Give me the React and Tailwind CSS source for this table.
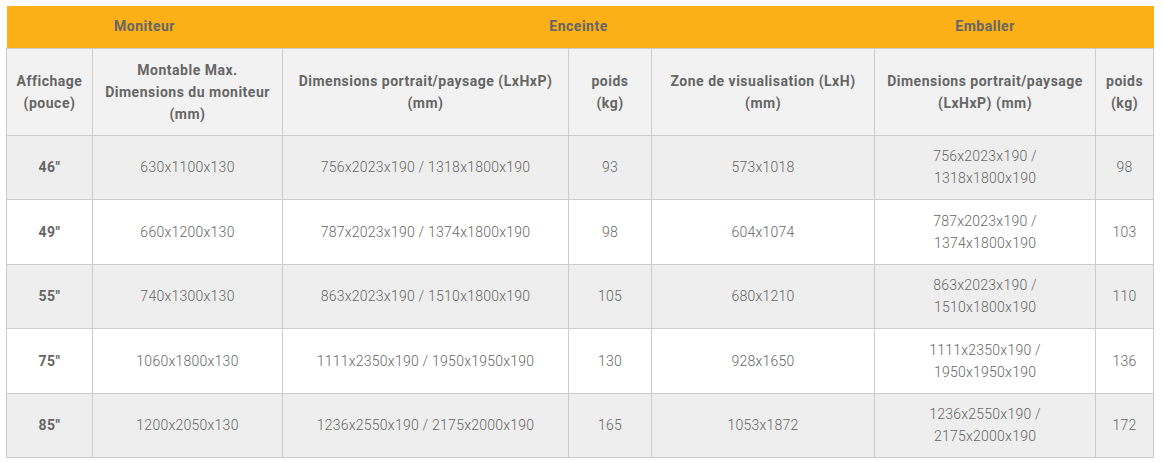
import React from 'react';

const rows = [
    { size: '46"', mount: '630x1100x130', dims: '756x2023x190 / 1318x1800x190', kg: '93', view: '573x1018', pack: ['756x2023x190 /', '1318x1800x190'], packKg: '98' },
    { size: '49"', mount: '660x1200x130', dims: '787x2023x190 / 1374x1800x190', kg: '98', view: '604x1074', pack: ['787x2023x190 /', '1374x1800x190'], packKg: '103' },
    { size: '55"', mount: '740x1300x130', dims: '863x2023x190 / 1510x1800x190', kg: '105', view: '680x1210', pack: ['863x2023x190 /', '1510x1800x190'], packKg: '110' },
    { size: '75"', mount: '1060x1800x130', dims: '1111x2350x190 / 1950x1950x190', kg: '130', view: '928x1650', pack: ['1111x2350x190 /', '1950x1950x190'], packKg: '136' },
    { size: '85"', mount: '1200x2050x130', dims: '1236x2550x190 / 2175x2000x190', kg: '165', view: '1053x1872', pack: ['1236x2550x190 /', '2175x2000x190'], packKg: '172' },
];

const th = 'border border-[#cccccc] px-2 text-center align-middle font-bold text-[14px] leading-[22px] tracking-[0.5px] text-[#666666]';
const td = 'border border-[#cccccc] px-2 text-center align-middle text-[14px] leading-[22px] tracking-[0.25px] text-[#666666] font-light';
const top = 'text-center align-middle font-bold text-[14px] tracking-[0.5px] text-[#666666]';

const App = () => {
    return (
        <div className="bg-white w-[1163px] h-[463px] p-[6px]" style={{ fontFamily: 'Roboto, "Liberation Sans", sans-serif' }}>
            <table className="table-fixed border-collapse w-[1147px]">
                <colgroup>
                    <col className="w-[86px]" />
                    <col className="w-[190px]" />
                    <col className="w-[286px]" />
                    <col className="w-[83px]" />
                    <col className="w-[223px]" />
                    <col className="w-[221px]" />
                    <col className="w-[58px]" />
                </colgroup>
                <thead>
                    <tr className="bg-[#fcaf17] h-[42px]">
                        <th colSpan={2} className={top}>Moniteur</th>
                        <th colSpan={3} className={top}>Enceinte</th>
                        <th className={top}>Emballer</th>
                        <th></th>
                    </tr>
                    <tr className="bg-[#f2f2f2] h-[87px]">
                        <th className={th}>Affichage<br />(pouce)</th>
                        <th className={th}>Montable Max.<br />Dimensions du moniteur<br />(mm)</th>
                        <th className={th}>Dimensions portrait/paysage (LxHxP)<br />(mm)</th>
                        <th className={th}>poids<br />(kg)</th>
                        <th className={th}>Zone de visualisation (LxH)<br />(mm)</th>
                        <th className={th}>Dimensions portrait/paysage<br />(LxHxP) (mm)</th>
                        <th className={th}>poids<br />(kg)</th>
                    </tr>
                </thead>
                <tbody>
                    {rows.map((r, i) => (
                        <tr key={r.size} className={(i % 2 === 0 ? 'bg-[#eeeeee]' : 'bg-white') + ' h-[64.5px]'}>
                            <td className={th}>{r.size}</td>
                            <td className={td}>{r.mount}</td>
                            <td className={td}>{r.dims}</td>
                            <td className={td}>{r.kg}</td>
                            <td className={td}>{r.view}</td>
                            <td className={td}>{r.pack[0]}<br />{r.pack[1]}</td>
                            <td className={td}>{r.packKg}</td>
                        </tr>
                    ))}
                </tbody>
            </table>
        </div>
    );
};

export default App;
